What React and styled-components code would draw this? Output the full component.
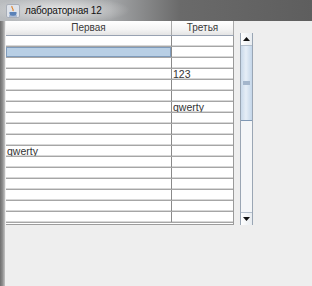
import React from 'react'
import styled, { createGlobalStyle } from 'styled-components'

const GlobalStyle = createGlobalStyle`
    html, body {
        margin: 0;
        padding: 0;
        background: #eeeeee;
    }
    body {
        font-family: "Liberation Sans", Arial, sans-serif;
    }
`

const Window = styled.div`
    width: 312px;
    height: 286px;
    display: flex;
    flex-direction: column;
    background: #eeeeee;
    overflow: hidden;
`

const TitleBar = styled.div`
    height: 21px;
    flex: none;
    display: flex;
    align-items: center;
    gap: 5px;
    padding-left: 6px;
    box-sizing: border-box;
    background:
        radial-gradient(ellipse 70px 14px at 60px 10px, rgba(236,236,236,0.95), rgba(236,236,236,0) 100%),
        linear-gradient(to right, #b9bcbf 0, #a4a6a8 110px, #6a6a6a 180px, #5e5e5e 312px);
`

const TitleText = styled.span`
    font-size: 10px;
    color: #111;
    letter-spacing: -0.2px;
`

const Frame = styled.div`
    flex: 1;
    display: flex;
`

const LeftEdge = styled.div`
    width: 5px;
    flex: none;
    background: linear-gradient(to right, #6e6e6e, #8e8e8e 50%, #c4c4c4);
`

const Content = styled.div`
    flex: 1;
    padding-left: 1px;
`

const ScrollPane = styled.div`
    width: 247px;
    display: grid;
    grid-template-columns: 228px 19px;
    grid-template-rows: 15px 189px;
`

const Header = styled.div`
    display: grid;
    grid-template-columns: 166px 62px;
    border-bottom: 1px solid #98a2b2;
    background: linear-gradient(#ffffff, #f4f4f4 60%, #e4e4e4);
`

const HeaderCell = styled.div`
    border-right: 1px solid #a9a9a9;
    font-size: 10px;
    color: #3a3a3a;
    text-align: center;
    line-height: 14px;
`

const Corner = styled.div`
    background: #eeeeee;
`

const Viewport = styled.div`
    background: #ffffff;
    border-bottom: 1px solid #9c9c9c;
    border-right: 1px solid #9a9a9a;
    overflow: hidden;
`

const Row = styled.div`
    display: grid;
    grid-template-columns: 166px 61px;
    height: 11px;
    box-sizing: border-box;
    border-bottom: 1px solid #a6a6a6;
    box-shadow: inset 0 -1px 0 #d8d8d8;
`

const Cell = styled.div`
    border-right: ${p => (p.last ? 'none' : '1px solid #8a8a8a')};
    background: ${p => (p.selected ? '#b8cfe5' : 'transparent')};
    box-shadow: ${p => (p.selected ? 'inset 0 0 0 1px #7f9bbb' : 'none')};
    font-size: 10.5px;
    line-height: 10px;
    color: #333;
    padding-left: 1px;
    white-space: nowrap;
    overflow: hidden;
`

const ScrollBar = styled.div`
    display: flex;
    flex-direction: column;
    padding-left: 6px;
    margin-top: -3px;
    background: #eeeeee;
`

const Track = styled.div`
    flex: 1;
    display: flex;
    flex-direction: column;
    border-left: 1px solid #9aa6b4;
    border-right: 1px solid #9aa6b4;
    background: #f4f6f8;
`

const ArrowButton = styled.div`
    height: 12px;
    flex: none;
    display: flex;
    align-items: center;
    justify-content: center;
    background: linear-gradient(to right, #ffffff, #e8ecf0);
    border-bottom: ${p => (p.down ? 'none' : '1px solid #b4bfcc')};
    border-top: ${p => (p.down ? '1px solid #b4bfcc' : 'none')};
`

const Thumb = styled.div`
    height: 74px;
    flex: none;
    display: flex;
    align-items: center;
    justify-content: center;
    background: linear-gradient(to right, #c9d9ea, #e6eef7 45%, #c4d6e9);
    border-bottom: 1px solid #7f98b4;
`

const Grip = styled.div`
    width: 7px;
    height: 4px;
    background: #a4b6cc;
`

const Filler = styled.div`
    flex: 1;
`

const Arrow = ({ down }) => (
    <svg width="7" height="4" viewBox="0 0 7 4">
        <polygon points={down ? '0,0 7,0 3.5,4' : '0,4 7,4 3.5,0'} fill="#111" />
    </svg>
)

const JavaIcon = () => (
    <svg width="14" height="14" viewBox="0 0 14 14">
        <rect x="0.5" y="0.5" width="13" height="13" rx="1.5" fill="#dfe3ea" stroke="#a8aeb8" />
        <path d="M6 2 C5 4 8 4.5 7 7" stroke="#e0832c" strokeWidth="1.2" fill="none" />
        <path d="M3.5 8 h7 v1.5 a3.5 2.5 0 0 1 -7 0 z" fill="#5a82b8" />
        <rect x="3" y="11.5" width="8" height="1" fill="#7a96c0" />
    </svg>
)

const rows = [
    ['', ''],
    ['', ''],
    ['', ''],
    ['', '123'],
    ['', ''],
    ['', ''],
    ['', 'qwerty'],
    ['', ''],
    ['', ''],
    ['', ''],
    ['qwerty', ''],
    ['', ''],
    ['', ''],
    ['', ''],
    ['', ''],
    ['', ''],
    ['', ''],
]

const App = () => (
    <>
        <GlobalStyle />
        <Window>
            <TitleBar>
                <JavaIcon />
                <TitleText>лабораторная 12</TitleText>
            </TitleBar>
            <Frame>
                <LeftEdge />
                <Content>
                    <ScrollPane>
                        <Header>
                            <HeaderCell>Первая</HeaderCell>
                            <HeaderCell>Третья</HeaderCell>
                        </Header>
                        <Corner />
                        <Viewport>
                            {rows.map((r, i) => (
                                <Row key={i}>
                                    <Cell selected={i === 1}>{r[0]}</Cell>
                                    <Cell last>{r[1]}</Cell>
                                </Row>
                            ))}
                        </Viewport>
                        <ScrollBar>
                            <Track>
                                <ArrowButton><Arrow /></ArrowButton>
                                <Thumb><Grip /></Thumb>
                                <Filler />
                                <ArrowButton down><Arrow down /></ArrowButton>
                            </Track>
                        </ScrollBar>
                    </ScrollPane>
                </Content>
            </Frame>
        </Window>
    </>
)

export default App
